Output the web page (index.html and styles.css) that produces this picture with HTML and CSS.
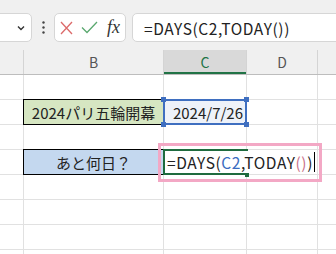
FILE: index.html
```html
<!DOCTYPE html>
<html lang="ja">
<head>
    <meta charset="UTF-8">
    <meta name="viewport" content="width=device-width, initial-scale=1.0">
    <title>DAYS関数</title>
    <link rel="stylesheet" href="styles.css">
</head>
<body>
    <div class="toolbar">
        <div class="namebox">
            <svg width="8" height="6" viewBox="0 0 8 6"><path d="M1 1.5 L4 4.5 L7 1.5" fill="none" stroke="#333" stroke-width="1.4"/></svg>
        </div>
        <div class="grip">
            <svg width="3" height="13" viewBox="0 0 3 13"><circle cx="1.5" cy="1.5" r="1.2" fill="#444"/><circle cx="1.5" cy="6.5" r="1.2" fill="#444"/><circle cx="1.5" cy="11.5" r="1.2" fill="#444"/></svg>
        </div>
        <div class="fxbuttons">
            <svg width="13" height="14" viewBox="0 0 13 14"><path d="M1 1 L12 13 M12 1 L1 13" stroke="#dc6a6a" stroke-width="1.3" fill="none"/></svg>
            <svg width="17" height="13" viewBox="0 0 17 13"><path d="M1 6.5 L6 11.5 L16 1" stroke="#5aa86f" stroke-width="1.3" fill="none"/></svg>
            <span class="fx">fx</span>
        </div>
        <div class="formula">=DAYS(C2,TODAY())</div>
    </div>

    <div class="colheads">
        <div class="head"></div>
        <div class="head">B</div>
        <div class="head active">C</div>
        <div class="head">D</div>
        <div class="head"></div>
    </div>

    <div class="sheet">
        <div></div><div></div><div></div><div></div><div></div>

        <div></div>
        <div class="label green">2024パリ五輪開幕</div>
        <div class="ref">2024/7/26<span class="dot tl"></span><span class="dot tr"></span><span class="dot bl"></span><span class="dot br"></span></div>
        <div></div><div></div>

        <div></div><div></div><div></div><div></div><div></div>

        <div></div>
        <div class="label blue">あと何日？</div>
        <div class="edit">=DAYS(<span class="c-ref">C2</span>,TODAY<span class="c-par">()</span>)<span class="caret"></span><span class="handle"></span></div>
        <div></div>

        <div></div><div></div><div></div><div></div><div></div>
        <div></div><div></div><div></div><div></div><div></div>
        <div></div><div></div><div></div><div></div><div></div>
        <div></div><div></div><div></div><div></div><div></div>
    </div>

    <div class="note"></div>
</body>
</html>
```

FILE: styles.css
```css
html {
    overflow: hidden;
}

body {
    margin: 0;
    width: 336px;
    height: 254px;
    overflow: hidden;
    background-color: #fff;
    font-family: "Noto Sans CJK JP", "Noto Sans", sans-serif;
    color: #222;
    position: relative;
}

.toolbar {
    height: 50px;
    box-sizing: border-box;
    padding-top: 13px;
    background-color: #f0f0f0;
    display: flex;
    align-items: flex-start;
}

.namebox,
.fxbuttons,
.formula {
    height: 29px;
    box-sizing: border-box;
    background-color: #fff;
    border: 1px solid #d6d6d6;
    border-radius: 5px;
    display: flex;
    align-items: center;
}

.namebox {
    width: 38px;
    margin-left: -6px;
    justify-content: flex-end;
    padding-right: 6px;
}

.grip {
    width: 22px;
    height: 29px;
    display: flex;
    align-items: center;
    justify-content: center;
}

.fxbuttons {
    width: 72px;
    padding-left: 5px;
    gap: 8px;
}

.fx {
    font-family: "Liberation Serif", serif;
    font-style: italic;
    font-size: 18px;
    color: #333;
    margin-left: 1px;
    line-height: 1;
    padding-bottom: 2px;
}

.formula {
    flex: 1;
    margin-left: 6px;
    margin-right: -10px;
    padding-left: 11px;
    font-size: 15.5px;
    letter-spacing: 0.6px;
    color: #222;
    white-space: nowrap;
}

.colheads,
.sheet {
    display: grid;
    grid-template-columns: 23px 139px 82px 70px 1fr;
    column-gap: 1px;
}

.colheads {
    height: 24px;
    background-color: #d4d4d4;
    border-bottom: 1px solid #bdbdbd;
}

.head {
    background-color: #f0f0f0;
    display: flex;
    align-items: center;
    justify-content: center;
    font-size: 14px;
    color: #555;
}

.head.active {
    background-color: #d9d9d9;
    color: #217346;
    box-shadow: inset 0 -2px 0 #217346;
}

.sheet {
    grid-template-rows: repeat(7, 24px) 4px;
    row-gap: 1px;
    background-color: #e1e1e1;
}

.sheet > div {
    background-color: #fff;
    font-size: 15px;
    display: flex;
    align-items: center;
    white-space: nowrap;
}

.sheet > .label {
    justify-content: center;
    box-shadow: 0 0 0 1px #000;
    z-index: 1;
}

.sheet > .green {
    background-color: #d6e6c2;
}

.sheet > .blue {
    background-color: #c4d8ef;
}

.sheet > .ref {
    position: relative;
    justify-content: flex-end;
    padding-right: 3px;
    background-color: #eef2f9;
    z-index: 2;
}

.ref::before {
    content: "";
    position: absolute;
    left: -1px;
    top: -1px;
    right: -1px;
    bottom: -1px;
    border: 2px solid #3f6fc0;
}

.dot {
    position: absolute;
    width: 5px;
    height: 5px;
    background-color: #3f6fc0;
}

.dot.tl { left: -3px; top: -3px; }
.dot.tr { right: -3px; top: -3px; }
.dot.bl { left: -3px; bottom: -3px; }
.dot.br { right: -3px; bottom: -3px; }

.sheet > .edit {
    grid-column: span 2;
    position: relative;
    padding-left: 3px;
    font-size: 15.5px;
    letter-spacing: 0.6px;
    z-index: 2;
}

.edit::before {
    content: "";
    position: absolute;
    left: -1px;
    top: -1px;
    width: 83px;
    bottom: -1px;
    border: 2px solid #1f6b3e;
    border-right: none;
}

.c-ref {
    color: #3a6cc0;
}

.c-par {
    color: #c9708a;
}

.caret {
    width: 1px;
    height: 20px;
    margin-left: 1px;
    background-color: #000;
}

.handle {
    position: absolute;
    left: 81px;
    bottom: -3px;
    width: 4px;
    height: 4px;
    background-color: #1f6b3e;
}

.note {
    position: absolute;
    left: 158px;
    top: 143px;
    width: 158px;
    height: 33px;
    border: 3px solid #f3a8c5;
    z-index: 3;
}
```
